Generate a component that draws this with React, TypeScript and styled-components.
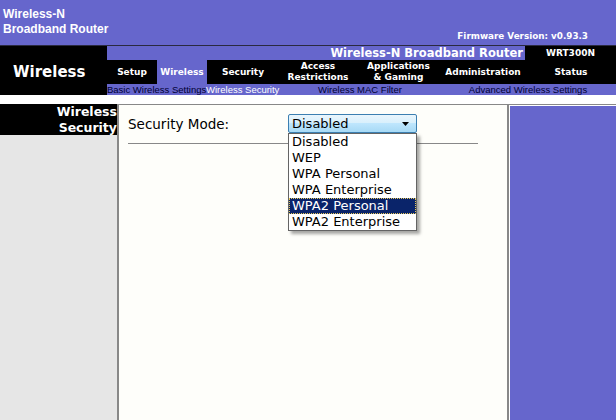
import React from "react";
import styled, { createGlobalStyle } from "styled-components";

const Global = createGlobalStyle`
  html, body { margin: 0; padding: 0; background: #ffffff; }
  body { font-family: "DejaVu Sans", Verdana, sans-serif; }
`;

const PURPLE = "#6666CC";

const Page = styled.div`
  height: 100vh;
  display: flex;
  flex-direction: column;
  overflow: hidden;
`;

const Header = styled.header`
  height: 45px;
  box-sizing: border-box;
  background: ${PURPLE};
  border-bottom: 1px solid #2a2a40;
  display: flex;
  justify-content: space-between;
  align-items: flex-start;
  padding: 0 28px 0 3px;
  height: 46px;
`;

const Brand = styled.div`
  padding-top: 7px;
  font-family: "Liberation Sans", Arial, sans-serif;
  font-weight: bold;
  font-size: 12px;
  line-height: 15px;
  color: #ffffff;
`;

const Firmware = styled.div`
  align-self: flex-end;
  margin-bottom: 4px;
  font-weight: bold;
  font-size: 8.8px;
  line-height: 10px;
  color: #ffffff;
  white-space: nowrap;
`;

const Band = styled.div`
  height: 49px;
  display: flex;
`;

const SectionTitle = styled.div`
  width: 107px;
  flex: none;
  background: #000000;
  color: #ffffff;
  font-weight: bold;
  font-size: 15px;
  display: flex;
  align-items: center;
  box-sizing: border-box;
  padding: 2px 0 0 13px;
`;

const NavArea = styled.div`
  flex: 1;
  display: flex;
  flex-direction: column;
`;

const TitleRow = styled.div`
  height: 14px;
  display: flex;
  background: ${PURPLE};
`;

const ProductTitle = styled.div`
  flex: 1;
  text-align: right;
  padding-right: 2px;
  font-weight: bold;
  font-size: 11.5px;
  line-height: 14px;
  color: #ffffff;
  white-space: nowrap;
`;

const Model = styled.div`
  width: 91px;
  background: #000000;
  color: #ffffff;
  text-align: center;
  font-weight: bold;
  font-size: 9px;
  line-height: 13px;
  padding-top: 1px;
`;

const Tabs = styled.nav`
  height: 24px;
  display: flex;
  background: #000000;
`;

const Tab = styled.div<{ $w: number; $active?: boolean }>`
  width: ${(p) => p.$w}px;
  flex: none;
  display: flex;
  align-items: center;
  justify-content: center;
  text-align: center;
  font-weight: bold;
  font-size: 9px;
  line-height: 11px;
  color: #ffffff;
  background: ${(p) => (p.$active ? PURPLE : "#000000")};
  white-space: nowrap;
`;

const SubNav = styled.div`
  height: 11px;
  display: flex;
  background: ${PURPLE};
  font-family: "Liberation Sans", Arial, sans-serif;
  font-size: 9.5px;
  line-height: 11px;
`;

const SubItem = styled.div<{ $w: number; $center?: boolean; $active?: boolean }>`
  width: ${(p) => p.$w}px;
  flex: none;
  text-align: ${(p) => (p.$center ? "center" : "left")};
  color: ${(p) => (p.$active ? "#ffffff" : "#000033")};
  white-space: nowrap;
`;

const Spacer = styled.div`
  height: 9px;
  background: #ffffff;
`;

const Main = styled.div`
  flex: 1;
  display: flex;
  align-items: stretch;
`;

const LeftCol = styled.aside`
  width: 117px;
  flex: none;
  background: #e6e6e6;
`;

const SideHead = styled.div`
  height: 31px;
  background: #000000;
  color: #ffffff;
  text-align: right;
  font-weight: bold;
  font-size: 12.5px;
  line-height: 15.5px;
`;

const Content = styled.section`
  width: 392px;
  flex: none;
  box-sizing: border-box;
  background: #fefefa;
  border-left: 2px solid #888888;
  border-right: 2px solid #888888;
  border-top: 1px solid #888888;
  padding: 9px 0 0 9px;
`;

const RightCol = styled.aside`
  flex: 1;
  display: flex;
  background: #ffffff;
  border-top: 1px solid #888888;
  padding: 1px 0 0 1px;
`;

const RightFill = styled.div`
  flex: 1;
  background: ${PURPLE};
`;

const FormRow = styled.div`
  display: flex;
  align-items: center;
  height: 19px;
`;

const Label = styled.div`
  width: 160px;
  flex: none;
  font-size: 13.5px;
  color: #000000;
  white-space: nowrap;
`;

const SelectWrap = styled.div`
  position: relative;
  width: 129px;
  height: 19px;
`;

const SelectBox = styled.div`
  box-sizing: border-box;
  width: 100%;
  height: 100%;
  border: 1px solid #3c7fb1;
  border-radius: 2px;
  background: linear-gradient(#eaf6fd 0%, #d9f0fc 45%, #bee6fd 50%, #a7d9f5 100%);
  display: flex;
  align-items: center;
  justify-content: space-between;
  padding: 0 7px 0 3px;
  font-size: 13px;
  line-height: 17px;
  color: #000000;
`;

const Arrow = styled.svg`
  width: 7px;
  height: 4px;
  display: block;
`;

const DropList = styled.ul`
  position: absolute;
  top: 19px;
  left: 0;
  width: 129px;
  box-sizing: border-box;
  margin: 0;
  padding: 0;
  list-style: none;
  background: #ffffff;
  border: 1px solid #646464;
  box-shadow: 3px 3px 3px rgba(0, 0, 0, 0.35);
  z-index: 2;
`;

const Option = styled.li<{ $selected?: boolean }>`
  height: 16px;
  box-sizing: border-box;
  padding-left: 3px;
  font-size: 13px;
  line-height: 16px;
  white-space: nowrap;
  color: ${(p) => (p.$selected ? "#ffffff" : "#000000")};
  background: ${(p) => (p.$selected ? "#0a246a" : "transparent")};
  outline: ${(p) => (p.$selected ? "1px dotted #e6c85a" : "none")};
  outline-offset: -1px;
`;

const Divider = styled.div`
  margin-top: 10px;
  width: 350px;
  height: 1px;
  background: #888888;
`;

const tabs = [
  { label: "Setup", w: 50 },
  { label: "Wireless", w: 50, active: true },
  { label: "Security", w: 72 },
  { label: "Access\nRestrictions", w: 78 },
  { label: "Applications\n& Gaming", w: 83 },
  { label: "Administration", w: 86 },
  { label: "Status", w: 90 },
];

const options = [
  "Disabled",
  "WEP",
  "WPA Personal",
  "WPA Enterprise",
  "WPA2 Personal",
  "WPA2 Enterprise",
];

export default function App() {
  return (
    <Page>
      <Global />
      <Header>
        <Brand>
          Wireless-N
          <br />
          Broadband Router
        </Brand>
        <Firmware>Firmware Version: v0.93.3</Firmware>
      </Header>
      <Band>
        <SectionTitle>Wireless</SectionTitle>
        <NavArea>
          <TitleRow>
            <ProductTitle>Wireless-N Broadband Router</ProductTitle>
            <Model>WRT300N</Model>
          </TitleRow>
          <Tabs>
            {tabs.map((t) => (
              <Tab key={t.label} $w={t.w} $active={t.active}>
                <span>
                  {t.label.split("\n").map((line, i) => (
                    <React.Fragment key={i}>
                      {i > 0 && <br />}
                      {line}
                    </React.Fragment>
                  ))}
                </span>
              </Tab>
            ))}
          </Tabs>
          <SubNav>
            <SubItem $w={99}>Basic Wireless Settings</SubItem>
            <SubItem $w={74} $active>
              Wireless Security
            </SubItem>
            <SubItem $w={160} $center>
              Wireless MAC Filter
            </SubItem>
            <SubItem $w={176} $center>
              Advanced Wireless Settings
            </SubItem>
          </SubNav>
        </NavArea>
      </Band>
      <Spacer />
      <Main>
        <LeftCol>
          <SideHead>
            Wireless
            <br />
            Security
          </SideHead>
        </LeftCol>
        <Content>
          <FormRow>
            <Label>Security Mode:</Label>
            <SelectWrap>
              <SelectBox>
                <span>Disabled</span>
                <Arrow viewBox="0 0 7 4">
                  <path d="M0 0 H7 L3.5 4 Z" fill="#000" />
                </Arrow>
              </SelectBox>
              <DropList>
                {options.map((o) => (
                  <Option key={o} $selected={o === "WPA2 Personal"}>
                    {o}
                  </Option>
                ))}
              </DropList>
            </SelectWrap>
          </FormRow>
          <Divider />
        </Content>
        <RightCol>
          <RightFill />
        </RightCol>
      </Main>
    </Page>
  );
}
